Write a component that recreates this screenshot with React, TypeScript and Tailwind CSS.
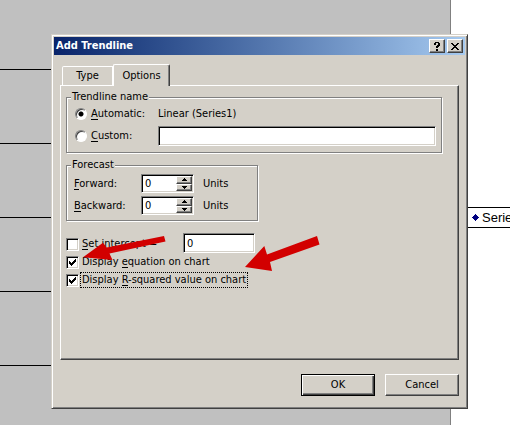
import { ReactNode } from "react";
import clsx from "clsx";

const sunken =
  "border border-t-[#808080] border-l-[#808080] border-b-white border-r-white bg-white shadow-[inset_1px_1px_#000,inset_-1px_-1px_#d4d0c8]";
const raised =
  "border border-t-white border-l-white border-b-[#404040] border-r-[#404040] bg-[#d4d0c8] shadow-[inset_-1px_-1px_#808080]";

const Key = ({ children }: { children: ReactNode }) => (
  <span className="shadow-[0_-1px_inset_#000]">{children}</span>
);

interface GroupProps {
  title: string;
  className?: string;
  children: ReactNode;
}

const Group = ({ title, className, children }: GroupProps) => (
  <fieldset
    className={clsx("min-w-0 border border-[#808080] shadow-[1px_1px_#fff,inset_1px_1px_#fff]", className)}
  >
    <legend className="ml-1 bg-[#d4d0c8] px-px leading-[14px]">{title}</legend>
    {children}
  </fieldset>
);

interface RadioProps {
  id: string;
  checked?: boolean;
  children: ReactNode;
}

const Radio = ({ id, checked, children }: RadioProps) => (
  <label htmlFor={id} className="flex items-center gap-1">
    <input
      id={id}
      type="radio"
      name="trendline-name"
      defaultChecked={checked}
      className="size-3 shrink-0 appearance-none rounded-full border border-t-[#808080] border-r-white border-b-white border-l-[#808080] bg-white shadow-[inset_1px_1px_#404040] checked:bg-[radial-gradient(circle,#000_2px,#fff_3px)]"
    />
    <span>{children}</span>
  </label>
);

interface CheckProps {
  id: string;
  checked?: boolean;
  focused?: boolean;
  children: ReactNode;
}

const Check = ({ id, checked, focused, children }: CheckProps) => (
  <label htmlFor={id} className="flex h-[18px] items-center gap-px">
    <span className="grid shrink-0">
      <input
        id={id}
        type="checkbox"
        defaultChecked={checked}
        className={clsx("peer col-start-1 row-start-1 size-[13px] appearance-none", sunken)}
      />
      <svg
        viewBox="0 0 13 13"
        shapeRendering="crispEdges"
        className="pointer-events-none invisible col-start-1 row-start-1 size-[13px] peer-checked:visible"
        aria-hidden="true"
      >
        <path d="M3 5h1v3h-1zM4 6h1v3h-1zM5 7h1v3h-1zM6 6h1v3h-1zM7 5h1v3h-1zM8 4h1v3h-1zM9 3h1v3h-1z" />
      </svg>
    </span>
    <span
      className={clsx(
        "border px-px leading-[14px] whitespace-nowrap",
        focused ? "border-dotted border-black" : "border-transparent"
      )}
    >
      {children}
    </span>
  </label>
);

const SpinButton = ({ label, path }: { label: string; path: string }) => (
  <button type="button" aria-label={label} className={clsx("flex min-h-0 flex-1 items-center justify-center", raised)}>
    <svg viewBox="0 0 5 3" shapeRendering="crispEdges" className="h-[3px] w-[5px]" aria-hidden="true">
      <path d={path} />
    </svg>
  </button>
);

const Spinner = ({ id, children }: { id: string; children: ReactNode }) => (
  <>
    <label htmlFor={id}>{children}</label>
    <div className={clsx("flex h-[19px] p-px", sunken)}>
      <input id={id} defaultValue="0" className="w-0 flex-1 pl-0.5 outline-none" />
      <div className="flex w-4 flex-col">
        <SpinButton label="Increase" path="M2 0h1v1h1v1h1v1H0V2h1V1h1z" />
        <SpinButton label="Decrease" path="M0 0h5v1H4v1H3v1H2V2H1V1H0z" />
      </div>
    </div>
    <span className="pl-[9px]">Units</span>
  </>
);

const TitleBar = () => (
  <header className="flex h-[18px] items-center gap-0.5 bg-linear-to-r from-[#0a246a] to-[#a6caf0] px-0.5">
    <h1 className="flex-1 font-bold text-white">Add Trendline</h1>
    <button type="button" aria-label="Help" className={clsx("flex h-3.5 w-4 items-center justify-center", raised)}>
      <svg viewBox="0 0 6 9" shapeRendering="crispEdges" className="h-[9px] w-1.5" aria-hidden="true">
        <path d="M1 0h4v1h1v3H5v1H4v1H2V4h1V3h1V1H2v2H0V1h1zM2 7h2v2H2z" />
      </svg>
    </button>
    <button type="button" aria-label="Close" className={clsx("flex h-3.5 w-4 items-center justify-center", raised)}>
      <svg viewBox="0 0 8 7" shapeRendering="crispEdges" className="h-[7px] w-2" aria-hidden="true">
        <path d="M0 0h2v1h1v1h2V1h1V0h2v1H7v1H6v1H5v1h1v1h1v1h1v1H6V6H5V5H3v1H2v1H0V6h1V5h1V4h1V3H2V2H1V1H0z" />
      </svg>
    </button>
  </header>
);

const Dialog = () => (
  <section
    role="dialog"
    aria-label="Add Trendline"
    className="absolute top-[34px] right-[42px] left-[51px] border border-t-[#d4d0c8] border-r-[#404040] border-b-[#404040] border-l-[#d4d0c8] bg-[#d4d0c8] p-0.5 shadow-[inset_1px_1px_#fff,inset_-1px_-1px_#808080]"
  >
    <TitleBar />
    <form className="px-1.5 pt-[9px] pb-2.5">
      <div role="tablist" className="flex h-[21px] items-end pl-0.5">
        <button
          type="button"
          role="tab"
          aria-selected="false"
          className="h-[19px] w-[51px] rounded-tl-[2px] border-t border-r border-l border-white"
        >
          Type
        </button>
        <button
          type="button"
          role="tab"
          aria-selected="true"
          className="relative -mb-px h-[22px] w-[57px] rounded-t-[2px] border-t border-r border-l border-t-white border-r-[#404040] border-l-white bg-[#d4d0c8] shadow-[inset_-1px_0_#808080]"
        >
          Options
        </button>
      </div>

      <div
        role="tabpanel"
        className="min-h-[275px] border border-t-white border-r-[#404040] border-b-[#404040] border-l-white pt-1 pr-4 pl-[5px] shadow-[inset_-1px_-1px_#808080]"
      >
        <Group title="Trendline name" className="pb-1.5">
          <div className="grid grid-cols-[83px_1fr] items-center gap-y-[3px] pt-px pr-[5px] pl-2">
            <Radio id="automatic" checked>
              <Key>A</Key>utomatic:
            </Radio>
            <span className="leading-[18px]">Linear (Series1)</span>
            <Radio id="custom">
              <Key>C</Key>ustom:
            </Radio>
            <input aria-label="Custom name" className={clsx("h-5 w-full px-1 outline-none", sunken)} />
          </div>
        </Group>

        <Group title="Forecast" className="mt-[5px] w-48 pb-[5px]">
          <div className="grid grid-cols-[67px_53px_1fr] items-center gap-y-[3px] pt-0.5 pl-[7px]">
            <Spinner id="forward">
              <Key>F</Key>orward:
            </Spinner>
            <Spinner id="backward">
              <Key>B</Key>ackward:
            </Spinner>
          </div>
        </Group>

        <div className="mt-3 flex items-end">
          <div className="w-[117px]">
            <Check id="intercept">
              <Key>S</Key>et intercept =
            </Check>
          </div>
          <input aria-label="Intercept" defaultValue="0" className={clsx("h-5 w-[72px] px-[3px] outline-none", sunken)} />
        </div>
        <Check id="equation" checked>
          Display <Key>e</Key>quation on chart
        </Check>
        <Check id="r-squared" checked focused>
          Display <Key>R</Key>-squared value on chart
        </Check>
      </div>

      <div className="mt-3.5 flex justify-end gap-2.5">
        <button
          type="submit"
          className="h-[22px] w-[74px] border border-black shadow-[inset_1px_1px_#fff,inset_-1px_-1px_#404040,inset_-2px_-2px_#808080]"
        >
          OK
        </button>
        <button type="button" className={clsx("h-[22px] w-[74px]", raised)}>
          Cancel
        </button>
      </div>
    </form>
  </section>
);

const Arrows = () => (
  <svg
    viewBox="80 232 242 42"
    className="pointer-events-none absolute top-[232px] left-[80px] h-[42px] w-[242px] fill-[#d20000]"
    aria-hidden="true"
  >
    <path d="M83 257.3L103 242.7L106.7 247.5L164 236L165.5 241.5L109.5 253.5L112.5 260Z" />
    <path d="M245 267L264.3 246L267 254.5L317 236L319.5 244.5L270 262L272 271Z" />
  </svg>
);

export default function App() {
  return (
    <main className="relative flex min-h-screen overflow-hidden bg-white font-['DejaVu_Sans_Condensed',Tahoma,sans-serif] text-[11px] leading-[14px] text-black">
      <div className="mr-[59px] flex-1 border-r border-[#808080] bg-[#c0c0c0]">
        <div className="h-[70px] border-b border-black" />
        <div className="h-[74px] border-b border-black" />
        <div className="h-[74px] border-b border-black" />
        <div className="h-[74px] border-b border-black" />
        <div className="h-[74px] border-b border-black" />
      </div>

      <div className="absolute top-[207px] -right-6 flex h-[21px] w-[70px] items-center gap-[3px] border border-black bg-white pl-[7px] font-['Liberation_Sans',Arial,sans-serif] text-[13px]">
        <svg viewBox="0 0 7 7" shapeRendering="crispEdges" className="size-[7px] shrink-0 fill-[#000080]" aria-hidden="true">
          <path d="M3 0h1v1h1v1h1v1h1v1H6v1H5v1H4v1H3V6H2V5H1V4H0V3h1V2h1V1h1z" />
        </svg>
        Series1
      </div>

      <Dialog />
      <Arrows />
    </main>
  );
}
